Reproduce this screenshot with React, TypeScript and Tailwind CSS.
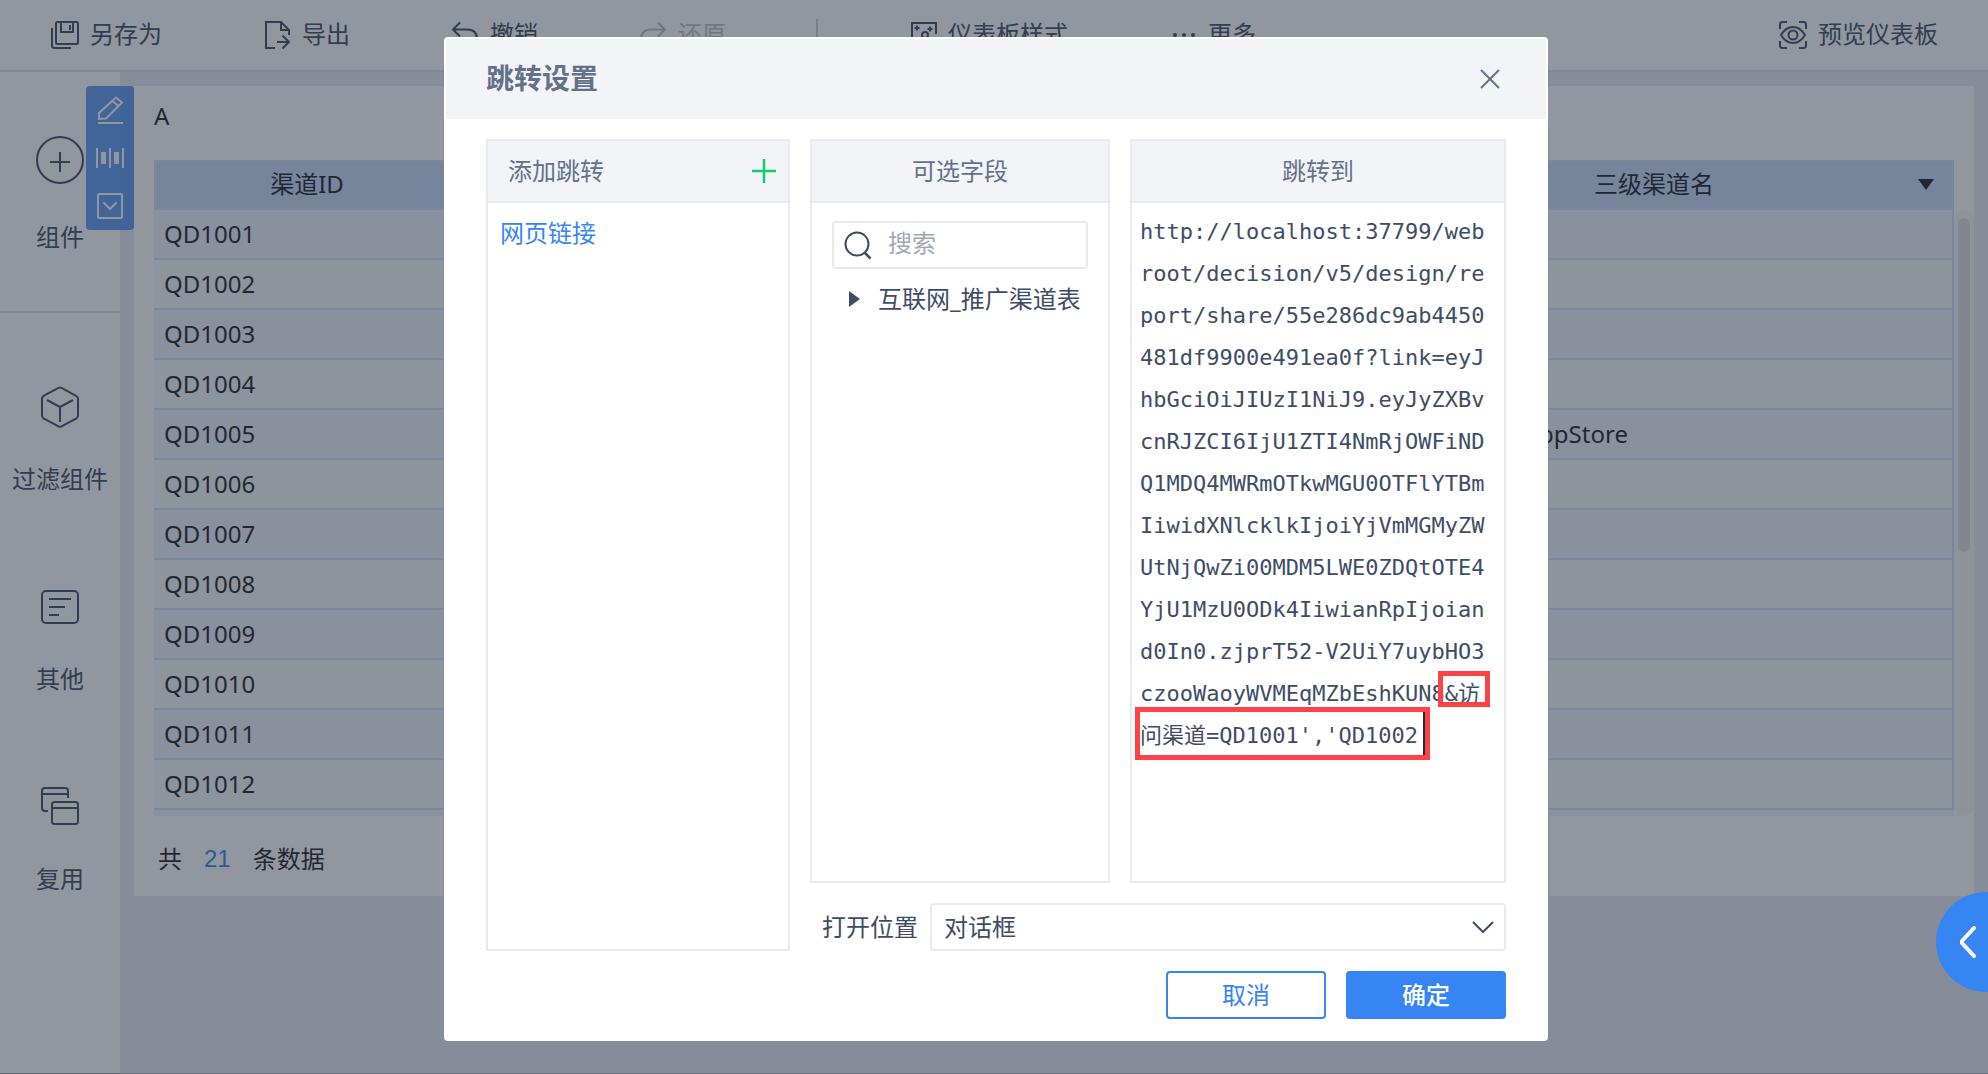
import { useState } from "react";
import type { ReactNode } from "react";

const channelRows = Array.from({ length: 12 }, (_, index) => ({
  id: `QD${1001 + index}`,
  name: index === 4 ? "应用市场-AppStore" : "",
}));

const initialLink =
  "http://localhost:37799/webroot/decision/v5/design/report/share/55e286dc9ab4450481df9900e491ea0f?link=eyJhbGciOiJIUzI1NiJ9.eyJyZXBvcnRJZCI6IjU1ZTI4NmRjOWFiNDQ1MDQ4MWRmOTkwMGU0OTFlYTBmIiwidXNlcklkIjoiYjVmMGMyZWUtNjQwZi00MDM5LWE0ZDQtOTE4YjU1MzU0ODk4IiwianRpIjoiand0In0.zjprT52-V2UiY7uybHO3czooWaoyWVMEqMZbEshKUN8&访问渠道=QD1001','QD1002";

function Icon({
  size = "size-7",
  box = 28,
  children,
}: {
  size?: string;
  box?: number;
  children: ReactNode;
}) {
  return (
    <svg
      className={`${size} shrink-0 overflow-visible`}
      viewBox={`0 0 ${box} ${box}`}
      fill="none"
      stroke="currentColor"
      strokeWidth="2"
      aria-hidden="true"
    >
      {children}
    </svg>
  );
}

function ToolbarButton({
  label,
  icon,
  disabled = false,
}: {
  label: string;
  icon: ReactNode;
  disabled?: boolean;
}) {
  return (
    <button
      disabled={disabled}
      className="flex shrink-0 items-center gap-3 leading-9 disabled:opacity-35"
    >
      <Icon>{icon}</Icon>
      <span className="pb-0.5">{label}</span>
    </button>
  );
}

function Toolbar() {
  return (
    <header className="flex h-[72px] items-center gap-[100px] border-b-2 border-[#dfe2e8] bg-white px-[50px]">
      <ToolbarButton
        label="另存为"
        icon={
          <>
            <rect x="6" y="1" width="22" height="22" rx="1.5" />
            <path d="M11 1v10h12V1M20 4v5M2 7v17.500a2.500 2.500 0 0 0 2.500 2.500H21" />
          </>
        }
      />
      <ToolbarButton
        label="导出"
        icon={
          <path d="M13 27H4V1h15l8 8v5M19 1v8h8M15 21h12M20.500 14.500L27 21l-6.500 6.500" />
        }
      />
      <ToolbarButton
        label="撤销"
        icon={<path d="M10 1.500L3 8.500l7 7M3 8.500h14c6 0 10 3 10 9.500v4" />}
      />
      <ToolbarButton
        label="还原"
        disabled
        icon={<path d="M20 1.500l7 7-7 7M27 8.500H13c-6 0-10 3-10 9.500v4" />}
      />
      <div className="-mx-2.5 h-8 w-0.5 bg-[#cdd1d9]" />
      <ToolbarButton
        label="仪表板样式"
        icon={
          <>
            <path d="M28 13V2H4v23h24v-6" />
            <path d="M9 4.500v5M6.500 7h5M22 5.500v5M19.500 8h5" />
            <circle cx="17" cy="14" r="3" />
            <path d="M15 16l-7 7" />
          </>
        }
      />
      <ToolbarButton
        label="更多"
        icon={
          <g fill="currentColor" stroke="none">
            <circle cx="7" cy="14" r="2" />
            <circle cx="16" cy="14" r="2" />
            <circle cx="25" cy="14" r="2" />
          </g>
        }
      />
      <div className="ml-auto">
        <ToolbarButton
          label="预览仪表板"
          icon={
            <>
              <path d="M2 8V3.500Q2 1 4.500 1H9M21 1h4.500Q28 1 28 3.500V8M28 20v4.500q0 2.500-2.500 2.500H21M9 27H4.500Q2 27 2 24.500V20" />
              <path d="M3 14c3-5 7-8 12-8s9 3 12 8c-3 5-7 8-12 8s-9-3-12-8z" />
              <circle cx="15" cy="14" r="4.500" />
            </>
          }
        />
      </div>
    </header>
  );
}

function SideButton({ label, children }: { label: string; children: ReactNode }) {
  return (
    <button className="flex w-full flex-col items-center gap-[30px] leading-9">
      <Icon size="size-12" box={48}>
        {children}
      </Icon>
      {label}
    </button>
  );
}

function Sidebar() {
  return (
    <nav className="w-[120px] shrink-0 bg-white">
      <div className="border-b-2 border-[#dfe2e8] pt-16 pb-14">
        <button className="flex w-full flex-col items-center gap-[35px] leading-9">
          <Icon size="size-12" box={48}>
            <circle cx="24" cy="24" r="23" />
            <path d="M24 16v20M14 26h20" />
          </Icon>
          组件
        </button>
      </div>
      <div className="flex flex-col gap-[86px] pt-[70px]">
        <SideButton label="过滤组件">
          <path d="M22.500 4.800q1.500-.8 3 0l14.500 8q2 1 2 3v16.500q0 2-1.500 3l-15 8q-1.500.8-3 0l-15-8q-1.500-1-1.500-3V15.800q0-2 1.500-3z" />
          <path d="M11 17l13 7 13-7M24 24v15" />
        </SideButton>
        <SideButton label="其他">
          <rect x="6" y="8" width="36" height="32" rx="4" />
          <path d="M13 16h22M13 24h16M13 32h10" />
        </SideButton>
        <SideButton label="复用">
          <path d="M12 28H9q-3 0-3-3V8q0-3 3-3h20q3 0 3 3v7M6 11h26" />
          <rect x="16" y="19" width="26" height="22" rx="2.500" />
          <path d="M16 25h26" />
        </SideButton>
      </div>
    </nav>
  );
}

// Quick actions that hang on the left edge of the selected component
function ComponentActions() {
  return (
    <div className="absolute top-0 -left-12 flex flex-col rounded bg-[#3685f2]/80 text-white">
      <button aria-label="编辑" className="flex size-12 items-center justify-center">
        <Icon>
          <path d="M3 23v-6L20 1.500l6 5L10 22.500zM16.500 5l6 5M2 27h25" />
        </Icon>
      </button>
      <button aria-label="图表" className="flex size-12 items-center justify-center">
        <Icon>
          <path d="M1 4v20M14 4v20M27 4v20" />
          <path d="M7.500 8v12M20.500 8v12" strokeWidth="5" />
        </Icon>
      </button>
      <button aria-label="更多操作" className="flex size-12 items-center justify-center">
        <Icon>
          <rect x="2" y="2" width="24" height="24" rx="1" />
          <path d="M7.500 10.500L14 17l6.500-6.500" />
        </Icon>
      </button>
    </div>
  );
}

function ChannelTable() {
  return (
    <table className="w-full table-fixed border-separate border-spacing-0 text-[#1a1f2b]">
      <thead>
        <tr className="h-[50px] bg-[#c7dbfb] *:border-y-2 *:border-[#cfe0fb] *:pb-0.5 *:leading-9 *:font-normal">
          <th className="w-[310px] border-l-2 pr-2.5 pl-1">渠道ID</th>
          <th className="w-[472px]">一级渠道名</th>
          <th className="w-[472px]">二级渠道名</th>
          <th className="border-r-2">
            <div className="flex items-center">
              <span className="flex-1 pr-4">三级渠道名</span>
              <button aria-label="排序" className="mr-4 flex w-5 justify-center">
                <svg className="h-[11px] w-4" viewBox="0 0 16 11" aria-hidden="true">
                  <path d="M0 0h16L8 11z" fill="currentColor" />
                </svg>
              </button>
            </div>
          </th>
        </tr>
      </thead>
      <tbody>
        {channelRows.map((row) => (
          <tr
            key={row.id}
            className="h-[50px] odd:bg-[#eff3ff] even:bg-[#f4fbfb] *:border-b-2 *:border-[#cfdffa] *:leading-9"
          >
            <td className="px-2.5">{row.id}</td>
            <td />
            <td />
            <td className="border-r-2 px-3">{row.name}</td>
          </tr>
        ))}
      </tbody>
    </table>
  );
}

function DashboardPanel() {
  return (
    <section className="relative bg-white text-[#1a1f2b]">
      <ComponentActions />
      <h2 className="px-5 pt-3 pb-[26px] leading-9">A</h2>
      <div className="flex h-[656px] overflow-hidden pl-5">
        <div className="min-w-0 flex-1 bg-[#eff3ff]">
          <ChannelTable />
        </div>
        <div className="mt-[50px] w-5 rounded-full bg-[#f7f7f8] px-1 pt-2">
          <div className="h-[334px] rounded-full bg-[#dcdee2]" />
        </div>
      </div>
      <p className="flex h-20 items-center gap-[22px] px-6 pt-1.5 leading-9">
        <span>共</span>
        <span className="font-[Liberation_Sans] text-[#3685f2]">21</span>
        <span>条数据</span>
      </p>
    </section>
  );
}

function Panel({ title, children }: { title: ReactNode; children: ReactNode }) {
  return (
    <section className="flex flex-col border-2 border-[#e8eaee]">
      <div className="flex h-[62px] items-center justify-center border-b-2 border-[#e8eaee] bg-[#f2f4f8] leading-9 text-[#64718a]">
        {title}
      </div>
      {children}
    </section>
  );
}

function JumpDialog() {
  const [link, setLink] = useState<string>(initialLink);
  const [search, setSearch] = useState<string>("");

  return (
    <div
      role="dialog"
      aria-labelledby="jump-title"
      className="flex w-[1104px] flex-col rounded bg-white p-0.5 text-[#3d4d66]"
    >
      <header className="flex h-20 items-center justify-between bg-[#f2f4f8] pr-[46px] pl-10 text-[#64718a]">
        <h1 id="jump-title" className="pb-0.5 text-[28px] leading-10 font-bold">
          跳转设置
        </h1>
        <button aria-label="关闭">
          <Icon size="size-5" box={20}>
            <path d="M1 1l18 18M19 1L1 19" />
          </Icon>
        </button>
      </header>

      <div className="grid grid-cols-[304px_1fr] gap-5 px-10 pt-5">
        <Panel
          title={
            <div className="flex w-full items-center justify-between pr-3 pl-5">
              <span>添加跳转</span>
              <button aria-label="添加" className="text-[#13cd66]">
                <Icon size="size-6" box={24}>
                  <path d="M12 0v24M0 12h24" strokeWidth="2.500" />
                </Icon>
              </button>
            </div>
          }
        >
          <a href="#link" className="px-3 pt-3 leading-9 text-[#3685f2]">
            网页链接
          </a>
        </Panel>

        <div className="flex flex-col gap-5">
          <div className="grid min-h-[744px] grid-cols-[300px_1fr] gap-5">
            <Panel title="可选字段">
              <label className="mx-5 mt-[18px] flex h-12 items-center gap-4 rounded border-2 border-[#e8eaee] px-2.5">
                <Icon>
                  <circle cx="13" cy="13" r="11.500" />
                  <path d="M20.500 21.500l6 6" strokeWidth="2.500" />
                </Icon>
                <input
                  aria-label="搜索"
                  placeholder="搜索"
                  value={search}
                  onChange={(e) => setSearch(e.target.value)}
                  className="w-full min-w-0 pb-1 leading-9 outline-none placeholder:text-[#a0a8b6]"
                />
              </label>
              <button className="mt-3 flex items-center gap-[18px] pl-[37px] leading-9">
                <svg className="h-4 w-[11px]" viewBox="0 0 11 16" aria-hidden="true">
                  <path d="M0 0l11 8-11 8z" fill="currentColor" />
                </svg>
                互联网_推广渠道表
              </button>
            </Panel>

            <Panel title="跳转到">
              <div className="relative flex flex-1">
                <textarea
                  aria-label="跳转到"
                  spellCheck={false}
                  value={link}
                  onChange={(e) => setLink(e.target.value)}
                  className="w-full resize-none overflow-hidden py-2 pr-3 pl-2 font-['DejaVu_Sans_Mono','Noto_Sans_CJK_SC',monospace] text-[22px] leading-[42px] break-all outline-none"
                />
                <div className="pointer-events-none absolute top-[468px] left-[306px] h-9 w-[52px] border-5 border-[#ff4245]" />
                <div className="pointer-events-none absolute top-[504px] left-[3px] flex h-[53px] w-[295px] justify-end border-5 border-[#ff4245]">
                  <span className="h-full w-0.5 bg-[#232d40]" />
                </div>
              </div>
            </Panel>
          </div>

          <div className="flex items-center gap-3 pl-3">
            <label htmlFor="open-position" className="shrink-0 leading-9">
              打开位置
            </label>
            <div className="relative flex-1">
              <select
                id="open-position"
                className="h-12 w-full appearance-none rounded border-2 border-[#e8eaee] bg-white px-3"
              >
                <option>对话框</option>
              </select>
              <svg
                className="pointer-events-none absolute top-[18px] right-3 h-3 w-[22px]"
                viewBox="0 0 22 12"
                fill="none"
                stroke="currentColor"
                strokeWidth="2"
                aria-hidden="true"
              >
                <path d="M1 1l10 10L21 1" />
              </svg>
            </div>
          </div>
        </div>
      </div>

      <footer className="flex justify-end gap-5 px-10 py-5">
        <button className="h-12 w-40 rounded border-2 border-[#3685f2] text-[#3685f2]">
          取消
        </button>
        <button className="h-12 w-40 rounded bg-[#3685f2] font-medium text-white">
          确定
        </button>
      </footer>
    </div>
  );
}

export default function App() {
  return (
    <div className="relative flex min-h-screen flex-col overflow-hidden border-b border-[#a5a6ad] bg-[#e9ecf2] font-['Noto_Sans','Noto_Sans_CJK_SC',sans-serif] text-2xl text-[#3d4d66]">
      <Toolbar />
      <div className="flex flex-1">
        <Sidebar />
        <main className="min-w-0 flex-1 px-3.5 pt-3.5">
          <DashboardPanel />
        </main>
      </div>

      <div className="fixed inset-0 flex items-center justify-center bg-[#252d3d]/50 pt-1 pl-1">
        <JumpDialog />
      </div>

      <button
        aria-label="展开"
        className="fixed right-[-48px] bottom-[82px] flex size-[100px] items-center rounded-full bg-[#3685f2] pl-6 text-white"
      >
        <svg
          className="h-8 w-4"
          viewBox="0 0 16 32"
          fill="none"
          stroke="currentColor"
          strokeWidth="4"
          strokeLinecap="round"
          strokeLinejoin="round"
          aria-hidden="true"
        >
          <path d="M14 2L1 16l13 14" />
        </svg>
      </button>
    </div>
  );
}
